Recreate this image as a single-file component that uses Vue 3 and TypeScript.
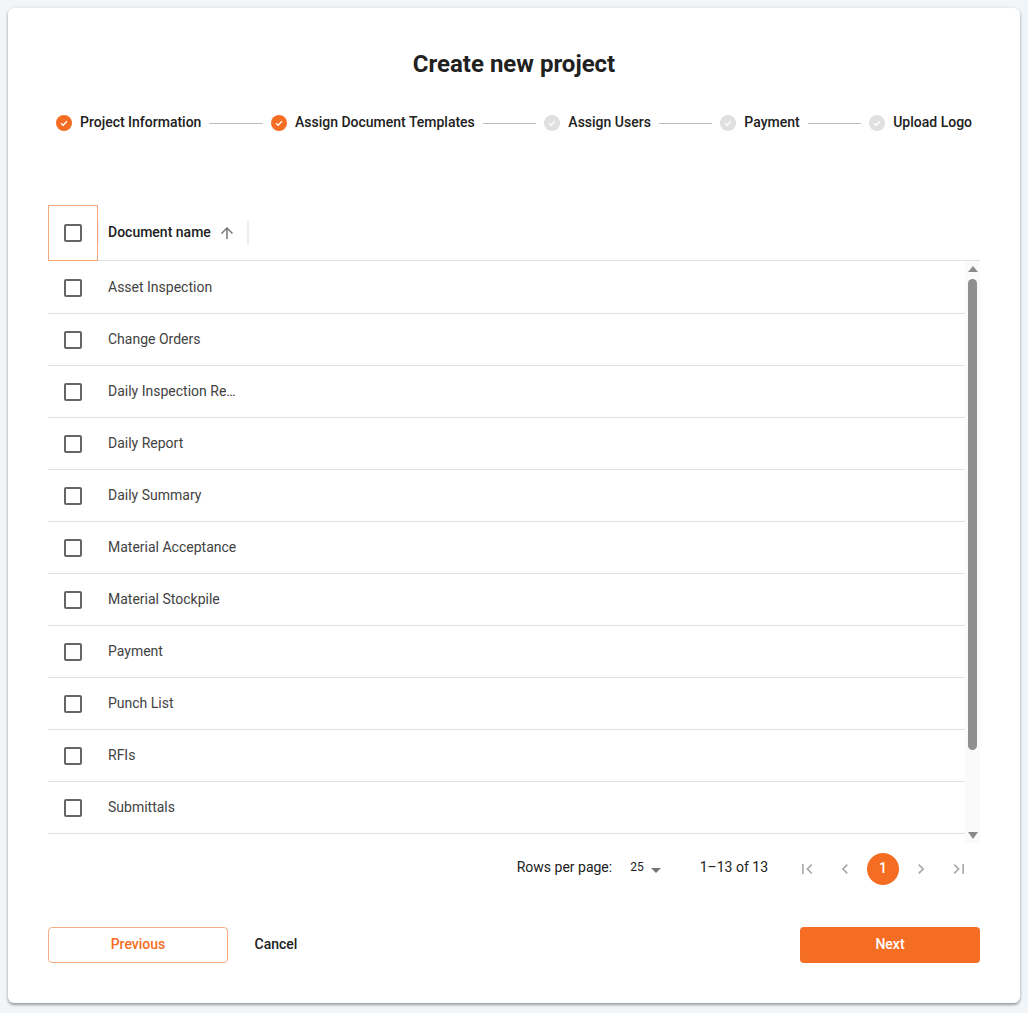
<script setup lang="ts">
const steps = [
  { label: 'Project Information', done: true },
  { label: 'Assign Document Templates', done: true },
  { label: 'Assign Users', done: false },
  { label: 'Payment', done: false },
  { label: 'Upload Logo', done: false },
]

const documents = [
  'Asset Inspection',
  'Change Orders',
  'Daily Inspection Report',
  'Daily Report',
  'Daily Summary',
  'Material Acceptance',
  'Material Stockpile',
  'Payment',
  'Punch List',
  'RFIs',
  'Submittals',
]

const boxPath = 'M19 5v14H5V5h14m0-2H5c-1.1 0-2 .9-2 2v14c0 1.1.9 2 2 2h14c1.1 0 2-.9 2-2V5c0-1.1-.9-2-2-2z'
</script>

<template>
  <main class="card">
    <h1 class="title">Create new project</h1>

    <ol class="stepper">
      <template v-for="(step, i) in steps" :key="step.label">
        <li v-if="i > 0" class="connector"></li>
        <li class="step">
          <span class="step-icon" :class="{ done: step.done }">
            <svg viewBox="0 0 16 16" width="16" height="16">
              <path d="M5 8.2l2.1 2.1L11 6.2" fill="none" stroke="#fff" stroke-width="1.3" />
            </svg>
          </span>
          <span class="step-label">{{ step.label }}</span>
        </li>
      </template>
    </ol>

    <section class="grid">
      <div class="grid-head">
        <div class="check-cell focused">
          <svg class="box" viewBox="0 0 24 24" width="24" height="24"><path :d="boxPath" /></svg>
        </div>
        <div class="name-head">
          <span class="name-title">Document name</span>
          <svg class="sort" viewBox="0 0 24 24" width="18" height="18">
            <path d="M20 12l-1.41-1.41L13 16.17V4h-2v12.17l-5.58-5.59L4 12l8 8 8-8z" transform="rotate(180 12 12)" />
          </svg>
        </div>
      </div>

      <div class="grid-body">
        <div class="rows">
          <div v-for="doc in documents" :key="doc" class="row">
            <div class="check-cell">
              <svg class="box" viewBox="0 0 24 24" width="24" height="24"><path :d="boxPath" /></svg>
            </div>
            <div class="name-cell">{{ doc }}</div>
          </div>
        </div>
        <div class="scrollbar">
          <span class="arrow up"></span>
          <span class="thumb"></span>
          <span class="arrow down"></span>
        </div>
      </div>

      <div class="pagination">
        <span class="rows-label">Rows per page:</span>
        <span class="rows-select">
          25
          <span class="caret"></span>
        </span>
        <span class="range">1–13 of 13</span>
        <div class="pages">
          <span class="page-btn">
            <svg viewBox="0 0 24 24" width="20" height="20"><path d="M18.41 16.59L13.83 12l4.58-4.59L17 6l-6 6 6 6 1.41-1.41zM6 6h2v12H6V6z" /></svg>
          </span>
          <span class="page-btn">
            <svg viewBox="0 0 24 24" width="20" height="20"><path d="M15.41 7.41 14 6l-6 6 6 6 1.41-1.41L10.83 12z" /></svg>
          </span>
          <span class="page-btn current">1</span>
          <span class="page-btn">
            <svg viewBox="0 0 24 24" width="20" height="20"><path d="M10 6 8.59 7.41 13.17 12l-4.58 4.59L10 18l6-6z" /></svg>
          </span>
          <span class="page-btn">
            <svg viewBox="0 0 24 24" width="20" height="20"><path d="M5.59 7.41L10.17 12l-4.58 4.59L7 18l6-6-6-6-1.41 1.41zM16 6h2v12h-2V6z" /></svg>
          </span>
        </div>
      </div>
    </section>

    <footer class="actions">
      <button class="btn outline">Previous</button>
      <button class="btn text">Cancel</button>
      <button class="btn solid">Next</button>
    </footer>
  </main>
</template>

<style>
html,
body {
  margin: 0;
  background: #f3f6f9;
}
</style>

<style scoped>
.card {
  box-sizing: border-box;
  width: 1012px;
  height: 995px;
  margin: 8px;
  padding: 40px 40px;
  background: #fff;
  border-radius: 6px;
  box-shadow: 0 2px 3px rgba(0, 0, 0, 0.35), 0 0 4px rgba(0, 0, 0, 0.08);
  font-family: Roboto, sans-serif;
  color: #212121;
}

.title {
  margin: 0;
  font-size: 24px;
  line-height: 32px;
  font-weight: 700;
  text-align: center;
}

.stepper {
  display: flex;
  align-items: center;
  list-style: none;
  margin: 26px 0 0;
  padding: 0 8px;
  height: 32px;
}

.step {
  display: flex;
  align-items: center;
  gap: 8px;
}

.step-icon {
  display: block;
  width: 16px;
  height: 16px;
  border-radius: 50%;
  background: #e0e0e0;
  margin-top: 1px;
}

.step-icon svg {
  display: block;
}

.step-icon.done {
  background: #f56d23;
}

.step-label {
  font-size: 14px;
  line-height: 20px;
  font-weight: 500;
}

.connector {
  flex: 1;
  height: 1px;
  margin: 2px 8px 0;
  background: #bdbdbd;
}

.grid {
  margin-top: 67px;
}

.grid-head {
  display: flex;
  height: 56px;
  border-bottom: 1px solid #e0e0e0;
  box-sizing: border-box;
}

.check-cell {
  box-sizing: border-box;
  flex: none;
  width: 50px;
  display: flex;
  align-items: center;
  justify-content: center;
}

.check-cell.focused {
  height: 56px;
  border: 1px solid #f6a77a;
}

.box {
  display: block;
  fill: #666;
}

.name-head {
  box-sizing: border-box;
  display: flex;
  align-items: center;
  width: 151px;
  height: 24px;
  margin-top: 16px;
  padding-left: 9px;
  border-left: 1px solid #eee;
  border-right: 2px solid #eee;
}

.name-title {
  padding-bottom: 2px;
  font-size: 14px;
  font-weight: 500;
}

.sort {
  margin-left: 7px;
  fill: #757575;
}

.grid-body {
  display: flex;
  height: 582px;
}

.rows {
  flex: 1;
  padding-top: 1px;
}

.row {
  display: flex;
  align-items: center;
  height: 52px;
  box-sizing: border-box;
  border-bottom: 1px solid #e0e0e0;
}

.name-cell {
  box-sizing: border-box;
  width: 150px;
  padding: 0 10px 2px;
  font-size: 14px;
  color: #424242;
  white-space: nowrap;
  overflow: hidden;
  text-overflow: ellipsis;
}

.scrollbar {
  flex: none;
  width: 15px;
  display: flex;
  flex-direction: column;
  align-items: center;
  background: #fafafa;
}

.thumb {
  width: 9px;
  height: 471px;
  margin-top: 7px;
  margin-bottom: 82px;
  border-radius: 5px;
  background: #8f8f8f;
}

.arrow {
  width: 0;
  height: 0;
  border-left: 5px solid transparent;
  border-right: 5px solid transparent;
}

.arrow.up {
  margin-top: 5px;
  border-bottom: 6px solid #8a8a8a;
}

.arrow.down {
  border-top: 7px solid #8a8a8a;
}

.pagination {
  display: flex;
  align-items: center;
  justify-content: flex-end;
  margin-top: 10px;
  height: 32px;
  padding-right: 5px;
  font-size: 14px;
}

.rows-label {
  padding-bottom: 4px;
}

.rows-select {
  display: flex;
  align-items: center;
  gap: 7px;
  margin-left: 18px;
  padding-bottom: 4px;
  font-size: 12px;
}

.caret {
  width: 0;
  height: 0;
  margin-top: 7px;
  border-left: 5.5px solid transparent;
  border-right: 5.5px solid transparent;
  border-top: 5px solid #757575;
}

.range {
  margin-left: 39px;
  margin-right: 23px;
  padding-bottom: 4px;
}

.pages {
  display: flex;
  gap: 6px;
}

.page-btn {
  display: flex;
  align-items: center;
  justify-content: center;
  width: 32px;
  height: 32px;
  border-radius: 50%;
  fill: #a9a9a9;
}

.page-btn.current {
  box-sizing: border-box;
  padding-bottom: 3px;
  background: #f56d23;
  color: #fff;
  font-size: 14px;
  font-weight: 500;
}

.actions {
  display: flex;
  align-items: center;
  margin-top: 42px;
}

.btn {
  box-sizing: border-box;
  height: 36px;
  border-radius: 4px;
  border: 1px solid transparent;
  background: none;
  font-family: Roboto, sans-serif;
  font-size: 14px;
  font-weight: 500;
  padding: 0 0 2px;
}

.btn.outline {
  width: 180px;
  border-color: #f8ab80;
  color: #f56d23;
}

.btn.text {
  width: 96px;
  color: #212121;
}

.btn.solid {
  width: 180px;
  margin-left: auto;
  background: #f56d23;
  color: #fff;
}
</style>
